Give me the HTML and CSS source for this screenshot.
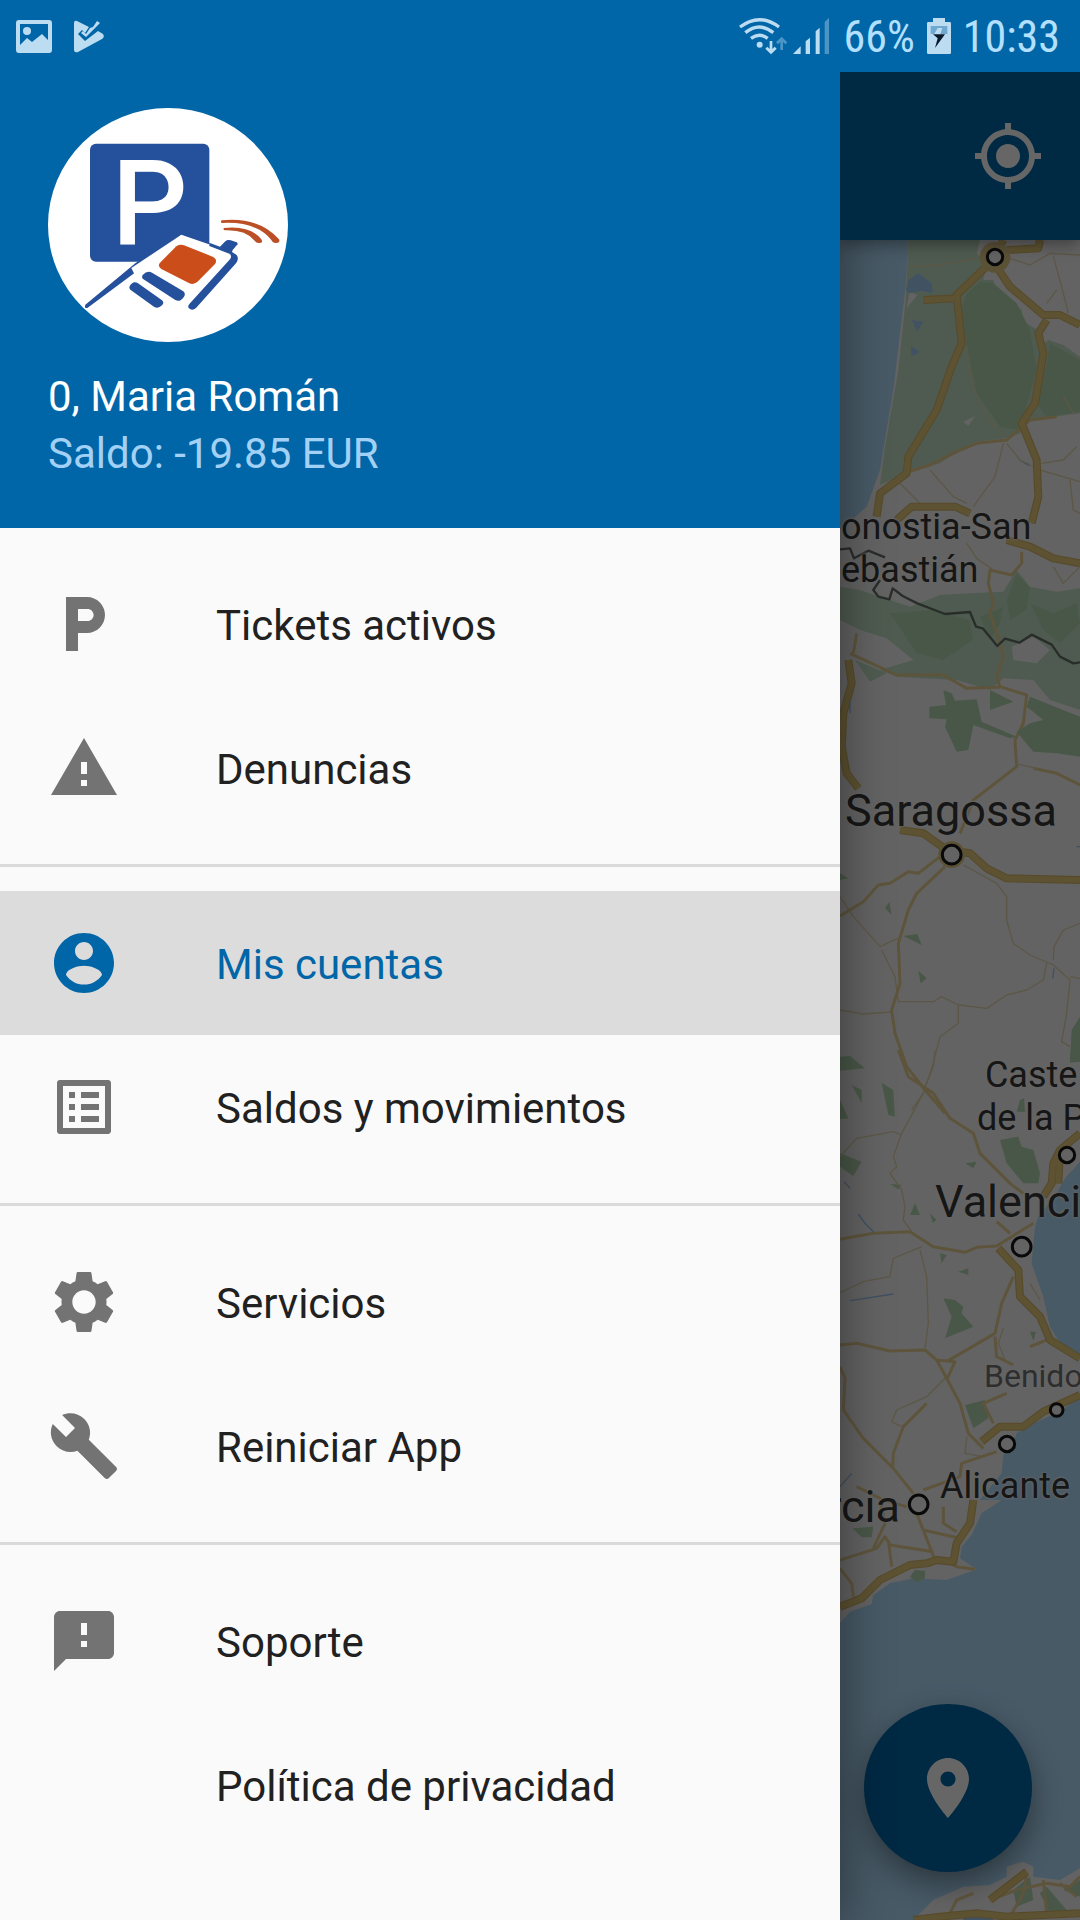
FILE: index.html
```html
<!DOCTYPE html>
<html lang="es">
<head>
<meta charset="utf-8">
<meta name="viewport" content="width=device-width, initial-scale=1">
<title>Mis cuentas</title>
<link rel="stylesheet" href="styles.css">
</head>
<body>
<div class="screen">
  <header class="status">
    <div class="status-left">
      <svg class="ic-photo" viewBox="0 0 36 33" aria-hidden="true"><path fill-rule="evenodd" d="M3 0h30a3 3 0 0 1 3 3v27a3 3 0 0 1-3 3H3a3 3 0 0 1-3-3V3a3 3 0 0 1 3-3zm1 4v21l7-7 5 4 10-8 6 6V4z"/><circle cx="11" cy="11" r="4"/></svg>
      <svg class="ic-play" viewBox="0 0 30 33" aria-hidden="true"><path d="M0 3Q0 0 3 1L15 7 11 13 8 10 4 14 11 21 24 11 29 14Q31 17 28 19L4 32Q0 33 0 30z"/><path d="M16 8 19 7 23 1 26 3 12 17 7 13 9 11 12 14z"/></svg>
    </div>
    <div class="status-right">
      <div class="net">
        <svg class="ic-wifi" viewBox="54 45 144 120" aria-hidden="true"><g class="arcs"><path d="M57 78Q115 34 174 78"/><path d="M73 95Q115 61 157 95"/><path d="M90 112Q115 93 140 112"/></g><circle cx="116" cy="131" r="9"/><path d="M146 120h8v24l7-7 6 6-17 17-17-17 6-6 7 7z"/><path class="faint" d="M178 147h8v-24l7 7 6-6-17-17-17 17 6 6 7-7z"/></svg>
        <svg class="ic-signal" viewBox="217 48 108 114" aria-hidden="true"><path d="M217 159h23v-23zM255 159h13v-49l-13 11zM285 159h12V80l-12 11z"/><path class="faint" d="M312 159h13V50l-13 13z"/></svg>
      </div>
      <span class="status-text">66%</span>
      <svg class="ic-battery" viewBox="618 54 72 108" aria-hidden="true"><path d="M636 54h36v12h14q4 0 4 4v88q0 4-4 4h-64q-4 0-4-4V70q0-4 4-4h14z"/><path class="level" d="M629 78h50v24h-50z"/><path d="m650 84-14 25h20l8-25z"/><path class="bolt" d="M636 103h36l-30 41 8-29z"/></svg>
      <span class="status-text">10:33</span>
    </div>
  </header>

  <div class="body">
    <aside class="drawer">
      <div class="account">
        <svg class="avatar" viewBox="0 0 720 702" role="img" aria-label="Logotipo">
          <ellipse cx="360" cy="351" rx="360" ry="351" fill="#fff"/>
          <rect x="126" y="107" width="358" height="354" rx="18" fill="#25509b"/>
          <text class="logo-letter" x="191" y="411">P</text>
          <path d="M399 382 570 448 420 602 240 520 114 602z" fill="#fff"/>
          <path d="M112 590 262 466 276 456 312 456 118 600Q108 602 112 590z" fill="#25509b"/>
          <path d="M400 380 548 431Q558 440 551 450L440 560 260 500 250 480z" fill="#fff"/>
          <path d="M484 404 516 416 532 400Q538 394 548 397L566 403Q572 408 566 412L554 426 552 432 566 441Q574 452 564 466L444 600Q432 610 422 600 418 594 426 586L546 454Q552 446 546 438L484 414z" fill="#25509b"/>
          <path d="M385 415Q396 408 408 412L494 446Q510 454 501 468L450 520Q438 532 424 526L340 483Q328 474 336 464z" fill="#cb4e1a"/>
          <path d="M284 501Q298 486 312 494L406 550Q414 558 408 566 396 584 382 576L284 512Q280 506 284 501zM245 534Q256 516 270 526L342 577Q350 584 342 592 330 604 318 596L247 545Q242 540 245 534z" fill="#25509b"/>
          <path d="M521 337Q634 326 693 394 698 404 686 405 674 406 670 396 626 340 522 345 516 342 521 337zM528 360Q608 352 640 394 646 404 636 405 624 406 620 398 592 364 530 367 524 364 528 360z" fill="#bb5026"/>
        </svg>
        <p class="name">0, Maria Román</p>
        <p class="balance">Saldo: -19.85 EUR</p>
      </div>
      <nav class="menu">
        <ul class="group">
          <li><a class="item" href="#tickets"><svg class="icon" viewBox="0 0 24 24" aria-hidden="true"><path d="M13 3H6v18h4v-6h3c3.31 0 6-2.69 6-6s-2.69-6-6-6zm.2 8H10V7h3.200c1.100 0 2 .900 2 2s-.900 2-2 2z"/></svg><span class="label">Tickets activos</span></a></li>
          <li><a class="item" href="#denuncias"><svg class="icon" viewBox="0 0 24 24" aria-hidden="true"><path d="M1 21h22L12 2 1 21zm12-3h-2v-2h2v2zm0-4h-2v-4h2v4z"/></svg><span class="label">Denuncias</span></a></li>
        </ul>
        <ul class="group">
          <li><a class="item active" href="#cuentas" aria-current="page"><svg class="icon" viewBox="0 0 24 24" aria-hidden="true"><path d="M12 2C6.480 2 2 6.480 2 12s4.480 10 10 10 10-4.480 10-10S17.520 2 12 2zm0 3c1.660 0 3 1.340 3 3s-1.340 3-3 3-3-1.340-3-3 1.340-3 3-3zm0 14.200c-2.500 0-4.710-1.280-6-3.220.030-1.990 4-3.080 6-3.080 1.990 0 5.970 1.090 6 3.080-1.290 1.940-3.500 3.220-6 3.220z"/></svg><span class="label">Mis cuentas</span></a></li>
          <li><a class="item" href="#saldos"><svg class="icon" viewBox="0 0 24 24" aria-hidden="true"><path d="M19 5v14H5V5h14m1.100-2H3.900c-.500 0-.900.400-.900.900v16.200c0 .400.400.900.900.900h16.200c.400 0 .900-.500.900-.900V3.900c0-.500-.500-.900-.900-.900zM11 7h6v2h-6V7zm0 4h6v2h-6v-2zm0 4h6v2h-6zM7 7h2v2H7zm0 4h2v2H7zm0 4h2v2H7z"/></svg><span class="label">Saldos y movimientos</span></a></li>
        </ul>
        <ul class="group">
          <li><a class="item" href="#servicios"><svg class="icon" viewBox="0 0 24 24" aria-hidden="true"><path d="M19.430 12.980c.040-.320.070-.640.070-.980s-.030-.660-.070-.980l2.110-1.650c.190-.150.240-.420.120-.640l-2-3.460c-.120-.220-.390-.300-.610-.220l-2.490 1c-.520-.400-1.080-.730-1.690-.980l-.380-2.650C14.460 2.180 14.250 2 14 2h-4c-.250 0-.460.180-.490.420l-.380 2.650c-.610.250-1.170.590-1.690.980l-2.490-1c-.230-.090-.490 0-.610.220l-2 3.460c-.130.220-.070.490.120.640l2.110 1.650c-.040.320-.070.650-.070.980s.030.660.070.980l-2.110 1.650c-.190.150-.240.420-.120.640l2 3.460c.120.220.390.300.610.220l2.490-1c.520.400 1.080.730 1.690.980l.380 2.650c.030.240.240.420.490.420h4c.250 0 .460-.180.490-.420l.380-2.650c.610-.250 1.170-.590 1.690-.980l2.490 1c.230.090.490 0 .610-.220l2-3.460c.120-.220.070-.490-.120-.640l-2.110-1.650zM12 15.900c-2.150 0-3.900-1.750-3.900-3.900s1.750-3.900 3.900-3.900 3.900 1.750 3.900 3.900-1.750 3.900-3.900 3.900z"/></svg><span class="label">Servicios</span></a></li>
          <li><a class="item" href="#reiniciar"><svg class="icon" viewBox="0 0 24 24" aria-hidden="true"><path d="M22.700 19l-9.100-9.100c.900-2.300.400-5-1.500-6.900-2-2-5-2.400-7.400-1.300L9 6 6 9 1.600 4.700C.400 7.100.900 10.100 2.900 12.100c1.900 1.900 4.600 2.400 6.900 1.500l9.100 9.100c.400.400 1 .400 1.400 0l2.300-2.300c.500-.400.500-1.100.100-1.400z"/></svg><span class="label">Reiniciar App</span></a></li>
        </ul>
        <ul class="group">
          <li><a class="item" href="#soporte"><svg class="icon" viewBox="0 0 24 24" aria-hidden="true"><path d="M20 2H4c-1.100 0-1.990.900-1.990 2L2 22l4-4h14c1.100 0 2-.900 2-2V4c0-1.100-.900-2-2-2zm-7 12h-2v-2h2v2zm0-4h-2V6h2v4z"/></svg><span class="label">Soporte</span></a></li>
          <li><a class="item" href="#privacidad"><span class="icon"></span><span class="label">Política de privacidad</span></a></li>
        </ul>
      </nav>
    </aside>

    <main class="content">
      <div class="appbar">
        <button class="bar-button" type="button" aria-label="Mi ubicación"><svg viewBox="0 0 24 24" aria-hidden="true"><path d="M12 8c-2.210 0-4 1.790-4 4s1.790 4 4 4 4-1.790 4-4-1.790-4-4-4zm8.940 3c-.460-4.170-3.770-7.480-7.940-7.940V1h-2v2.060C6.830 3.520 3.520 6.830 3.060 11H1v2h2.060c.460 4.170 3.770 7.480 7.940 7.940V23h2v-2.060c4.170-.460 7.480-3.770 7.940-7.940H23v-2h-2.060zM12 19c-3.870 0-7-3.130-7-7s3.130-7 7-7 7 3.130 7 7-3.130 7-7 7z"/></svg></button>
      </div>
      <div class="map">
        <svg class="tiles" viewBox="30 30 720 5040" preserveAspectRatio="xMinYMin slice" aria-hidden="true">
          <!-- Landes and the Bay of Biscay -->
          <path class="sea" d="M30 30H235L228 160 215 270 190 480 150 720 110 830 30 900z"/>
          <path class="park" d="M235 30H450L440 70 470 100 460 150 490 150 500 180 540 210 575 240 580 275 625 300 640 340 655 330 700 345 750 380V550L640 565 590 570 570 610 530 625 440 635 380 665 330 700 240 725 150 765 165 650 205 420 228 200z"/>
          <path class="forest" d="M410 190 450 155 490 160 560 220 600 300 620 420 570 600 510 590 440 490 410 350 390 250zM660 340 750 390V545L650 560 620 520 650 400z"/>
          <path class="land" d="M400 575 435 558 415 588zM238 185 262 195 230 235z"/>
          <path class="lake" d="M235 150 265 130 305 160 308 188 270 182 240 190 228 182zM245 270 280 275 262 305zM243 348 270 365 245 380zM565 690 600 702 595 708z"/>
          <path class="park" d="M30 1070 90 1080 180 1110 240 1130 330 1095 420 1090 520 1085 560 1020 600 1070 680 1085 750 1075V1440L660 1410 610 1350 520 1345 480 1380 380 1350 200 1340 150 1320 250 1290 170 1225 90 1200 30 1170zM75 1290 170 1330 120 1355z"/>
          <path class="forest" d="M560 1030 600 1075 590 1140 540 1170 530 1110zM450 1160 520 1130 510 1180 480 1230zM600 1120 670 1150 740 1120 750 1180 690 1240 640 1200zM180 1150 300 1140 420 1170 430 1230 340 1290 260 1270z"/>
          <path class="land" d="M545 1250 610 1220 660 1260 620 1300 550 1290z"/>
          <g class="thin">
            <path d="M235 110 330 105 440 85M670 80 695 170 715 250M650 220 680 180M525 80 600 105 660 70 750 75M410 350 430 480 470 560 520 620M700 500 730 550M520 640 495 740 430 830M300 720 370 800 410 820M210 760 270 820M530 640 570 690 630 720 750 755M635 700 700 690 740 650M410 940 440 985 490 1020M670 1010 700 1060 750 1010M720 750 730 840 750 850"/>
          </g>
          <g class="mid">
            <path d="M220 730 300 705 380 665 440 640 530 630 600 570 680 560"/>
            <path d="M575 965V1000L545 1035 480 1020 475 1060 490 1120 480 1150 510 1240 520 1280 500 1340 510 1370 590 1395 580 1480 555 1530 560 1610 430 1710 390 1810"/>
            <path d="M60 1270 200 1335 340 1335 410 1375 510 1372"/>
            <path d="M610 1615 680 1630 750 1665M80 1210 70 1270"/>
          </g>
          <g class="casing"><path d="M520 30 495 85 380 195 395 340 365 410 320 540 235 680 230 730 150 790 140 860M280 210 380 205M500 110 540 170 640 255 690 255 750 285M650 270 625 310 640 370 615 520 575 580 620 690 625 800 605 880M200 870 245 830 375 830 420 850M530 930 600 950 670 985 750 1000M530 60 625 55 630 30"/></g>
          <g class="road"><path d="M520 30 495 85 380 195 395 340 365 410 320 540 235 680 230 730 150 790 140 860M280 210 380 205M500 110 540 170 640 255 690 255 750 285M650 270 625 310 640 370 615 520 575 580 620 690 625 800 605 880M200 870 245 830 375 830 420 850M530 930 600 950 670 985 750 1000M530 60 625 55 630 30"/></g>
          <circle class="town" cx="495" cy="82" r="46"/>
          <path class="border" d="M30 958 60 955 72 985 115 962 165 982M150 1050 130 1080 145 1100 178 1108 188 1075 218 1098 262 1120 345 1152 420 1146 438 1190 458 1195 502 1248 525 1226 568 1238 605 1214 665 1244 690 1280 730 1300 750 1297"/>

          <!-- Ebro valley -->
          <g transform="translate(0 1290)">
            <path class="forest" d="M340 90 365 100 375 122 440 118 455 185 560 230 540 235 430 195 415 270 380 275 345 200 350 178 298 175 298 140 348 135zM480 90 550 125 480 150zM600 110 750 170V290L680 280 610 275 560 215 600 190 640 180 590 140zM220 828 262 822 275 855zM265 932 290 955 272 970zM165 745 178 725 185 765zM30 1190 60 1188 105 1225 30 1232zM65 1275 95 1290 95 1330zM155 1268 190 1290 195 1370 175 1365zM30 640 55 655 30 660zM725 1110 750 1070V1205H720z"/>
            <g class="thin"><path d="M30 710 70 770 150 860 215 830M155 870 195 950 205 1025H310L335 1010 385 1035 470 1045 530 1005 590 990 640 960 650 910M385 1035V1090L330 1130 310 1210 280 1300 245 1350M30 1050 100 1062 185 1056M400 615 500 670 530 710V780L550 850 600 885 670 915 720 960 710 1060 695 1145 720 1160M670 900 672 860 700 810 750 790M720 950 750 955M555 310 620 325"/></g>
            <g class="mid"><path d="M30 768 100 725 145 675 180 670 235 635 265 640 330 590M345 620 260 700 235 750 205 850 210 970 185 1050 195 1120 230 1220 285 1290 345 1360"/></g>
            <g class="casing"><path d="M55 0 65 70 40 160 35 260 50 340 85 385M210 510 280 520 350 570 420 580 470 625 530 655 750 660"/></g>
            <g class="road"><path d="M55 0 65 70 40 160 35 260 50 340 85 385M210 510 280 520 350 570 420 580 470 625 530 655 750 660"/></g>
            <circle class="town" cx="365" cy="584" r="40"/>
            <path class="river" d="M60 120V160M672 925 668 955M740 560h10"/>
          </g>

          <!-- Valencia coast -->
          <g transform="translate(0 2460)">
            <path class="sea" d="M750 335 705 385 680 430 625 500 615 530 605 640 640 740 660 830 690 880 750 915zM750 1040 690 1085 610 1120 560 1150 545 1190 520 1215 515 1270 450 1350H750z"/>
            <path class="forest" d="M510 270 565 260 575 290 610 300 630 370 625 400 580 400 530 340zM340 745 375 750 400 770 395 790 430 830 345 865 365 800zM405 1065 465 1050 475 1105 430 1135zM30 310 95 335 70 378 30 350zM240 495 255 460 270 495zM300 490 320 510 308 518zM405 340 440 335 430 355zM385 665 415 655 415 675zM330 610 350 615 335 640zM180 402 215 405 205 418zM720 10 750 0V35L720 38zM600 845 618 845 610 872zM570 150 582 145 585 185 560 185zM30 150 55 205 30 208z"/>
            <g class="thin"><path d="M280 130 215 250 190 320 200 350 180 370 215 420 225 470 220 510 245 545M30 320 80 265 190 245 215 255M275 590 190 625 180 680 100 695 30 728M270 600 290 680 295 820 285 895M345 985 290 1040 200 1080 185 1115 215 1130M520 835 505 880 525 930M600 700 630 750M410 1160 405 1210 460 1220M315 0 310 50 285 110"/></g>
            <g class="mid"><path d="M205 0 235 80 310 130 360 205 430 250 450 310 540 400 580 430M30 568 130 550 240 545 310 590 405 607 440 592 500 588 610 520M30 885 80 880 180 903 285 900 320 930 350 985 390 1060 415 1150 460 1195M550 680 515 760 495 850 350 935M495 860 500 920 550 945M320 930 375 935 350 990M30 950 45 985 40 1080 100 1165 190 1255 250 1330M290 1060 220 1130 190 1210 188 1255M280 1320 390 1280 395 1240 500 1205M530 1030 460 1060 490 1120M600 890 650 870M500 515 540 550"/></g>
            <g class="casing"><path d="M750 250 690 300 670 340 665 400 640 440M690 300 685 400M505 595 565 660 570 740 630 800 660 870 750 925M750 1035 640 1085 580 1130 510 1130 455 1175"/></g>
            <g class="road"><path d="M750 250 690 300 670 340 665 400 640 440M690 300 685 400M505 595 565 660 570 740 630 800 660 870 750 925M750 1035 640 1085 580 1130 510 1130 455 1175"/></g>
            <path class="river" d="M85 492 105 520 130 545M60 752 190 732M42 395 60 415M30 1310 65 1270"/>
          </g>

          <!-- Murcia, Alicante and the African shore -->
          <g transform="translate(0 3750)">
            <path class="sea" d="M515 60 455 100 425 165 395 200 390 235 440 268 350 300 250 295 180 310 130 345 125 372 60 395 30 430V1320H250L310 1260 400 1220 480 1215 530 1190 530 1160 580 1145 610 1160V1190L690 1200 750 1165V50z"/>
            <path class="forest" d="M68 145 130 140 125 172 95 172zM240 290 255 270 285 272 285 295 260 308zM550 1230 600 1190 610 1260 560 1280zM650 1220 710 1290 660 1300 630 1240zM700 1230 750 1200V1250z"/>
            <path class="lake" d="M400 1315 480 1295 490 1320H400z"/>
            <g class="mid"><path d="M30 240 140 205 165 170 180 195 310 215M175 180 185 260M130 205 165 130 150 60M260 100 315 240M280 150 390 175M340 80V130L380 155M30 265 65 310 70 350M80 20 160 60 230 80M350 245 380 260 435 268M430 1240 380 1260 360 1300M480 1260 560 1230 650 1210 720 1220 750 1190M590 1180 580 1240 540 1310M640 1200 650 1300M690 1210 740 1250"/></g>
            <g class="casing"><path d="M30 380 95 355 150 300 240 255 290 250 320 240 370 245 380 190 420 130 430 60M250 1320 330 1310 440 1300 530 1310 750 1300M480 1260 590 1175"/></g>
            <g class="road"><path d="M30 380 95 355 150 300 240 255 290 250 320 240 370 245 380 190 420 130 430 60M250 1320 330 1310 440 1300 530 1310 750 1300M480 1260 590 1175"/></g>
          </g>
          <g class="marker">
            <circle cx="495" cy="81" r="23"/><circle cx="365" cy="1874" r="28"/><circle cx="711" cy="2775" r="23"/><circle cx="575" cy="3050" r="28"/><circle cx="680" cy="3540" r="19"/><circle cx="531" cy="3642" r="23"/><circle cx="266" cy="3823" r="28"/>
          </g>
        </svg>
        <span class="place mid-size donostia">onostia-San<br>ebastián</span>
        <span class="place large zaragoza">Saragossa</span>
        <span class="place mid-size castellon">Caste<br>de la P</span>
        <span class="place large valencia">Valenci</span>
        <span class="place small benidorm">Benido</span>
        <span class="place mid-size alicante">Alicante</span>
        <span class="place large murcia">rcia</span>
      </div>
      <button class="fab" type="button" aria-label="Aparcar aquí"><svg viewBox="0 0 24 24" aria-hidden="true"><path d="M12 2C8.130 2 5 5.130 5 9c0 5.250 7 13 7 13s7-7.750 7-13c0-3.870-3.130-7-7-7zm0 9.500c-1.380 0-2.500-1.120-2.500-2.500s1.120-2.500 2.500-2.500 2.500 1.120 2.500 2.500-1.120 2.500-2.500 2.500z"/></svg></button>
      <div class="scrim"></div>
    </main>
  </div>
</div>
</body>
</html>
```
FILE: styles.css
```css
:root {
  --brand: #0066a8;
  --surface: #fafafa;
  --line: #dadada;
  --ink: #212121;
  --icon: #737373;
}

* { box-sizing: border-box; }

body {
  margin: 0;
  font-family: Roboto, "Noto Sans", sans-serif;
  font-size: 42px;
  color: var(--ink);
}

p, ul { margin: 0; padding: 0; list-style: none; }
button { padding: 0; border: 0; color: #fff; cursor: pointer; }
svg { display: block; fill: currentColor; }

.screen {
  display: flex;
  flex-direction: column;
  min-height: 100vh;
}

/* Status bar */
.status {
  display: flex;
  justify-content: space-between;
  align-items: center;
  height: 72px;
  padding: 0 20px 0 16px;
  background: var(--brand);
  color: #bcdcf2;
}
.status-left { display: flex; gap: 22px; }
.status-right { display: flex; align-items: center; gap: 12px; }
.net { display: flex; align-items: center; gap: 6px; padding-right: 3px; }
.status-text {
  padding-top: 2px;
  font-family: "Roboto Condensed", Roboto, sans-serif;
  font-size: 44px;
  line-height: 70px;
  color: #b3e0ff;
}
.ic-photo { width: 36px; height: 33px; }
.ic-play { width: 30px; height: 33px; }
.ic-wifi { width: 48px; height: 40px; }
.ic-signal { width: 36px; height: 38px; }
.ic-battery { width: 24px; height: 36px; }
.arcs { fill: none; stroke: currentColor; stroke-width: 10; }
.faint { opacity: .4; }
.level { fill: #6fa9d0; }
.bolt { fill: #0a1c2c; }

/* Drawer */
.body {
  flex: 1;
  display: grid;
  grid-template-columns: minmax(0, 840px) minmax(240px, 1fr);
}
.drawer {
  position: relative;
  z-index: 1;
  background: var(--surface);
  box-shadow: 0 0 48px rgba(0, 0, 0, .45);
  clip-path: inset(0 -60px 0 0);
}
.account {
  height: 456px;
  padding: 36px 48px 0;
  background: var(--brand);
}
.avatar { width: 240px; height: 234px; }
.logo-letter { font-size: 357px; font-weight: 500; fill: #fff; }
.name, .balance { line-height: 57px; }
.name { margin-top: 26px; color: #fff; }
.balance { color: #a3d1f5; }

.group { padding: 24px 0; }
.group + .group { border-top: 3px solid var(--line); }
.item {
  display: flex;
  align-items: center;
  gap: 96px;
  height: 144px;
  padding: 0 48px;
  color: var(--ink);
  text-decoration: none;
}
.icon { flex: none; width: 72px; height: 72px; color: var(--icon); }
.label { padding-top: 3px; }
.active { background: #dcdcdc; }
.active, .active .icon { color: var(--brand); }

/* Map screen behind the drawer */
.content {
  position: relative;
  display: flex;
  flex-direction: column;
  overflow: hidden;
}
.appbar {
  position: relative;
  z-index: 1;
  display: flex;
  justify-content: flex-end;
  align-items: center;
  height: 168px;
  padding-right: 36px;
  background: var(--brand);
  box-shadow: 0 4px 16px rgba(0, 0, 0, .4);
}
.bar-button { width: 72px; height: 72px; background: none; }
.map {
  position: relative;
  flex: 1;
  overflow: hidden;
  background: #f7f7f7;
}
.tiles {
  position: absolute;
  inset: 0;
  width: 100%;
  height: 100%;
  fill: none;
  stroke-linejoin: round;
}
.sea { fill: #b2e0ff; }
.land { fill: #f7f7f7; }
.park { fill: #c6e4c8; }
.forest { fill: #b6dab4; }
.lake { fill: #a2ccf5; }
.river { stroke: #9cc8f0; stroke-width: 4; }
.thin { stroke: #e6d8ae; stroke-width: 4; }
.mid { stroke: #e8d294; stroke-width: 9; }
.casing { stroke: #d8ba6c; stroke-width: 24; }
.road { stroke: #e8cd7c; stroke-width: 17; }
.town { fill: #e3cc88; }
.border { stroke: #66706a; stroke-width: 7; }
.marker { fill: #f7f7f7; stroke: #181818; stroke-width: 9; }

.place {
  position: absolute;
  white-space: nowrap;
  color: #383838;
  text-shadow: 0 0 3px #fff, 0 0 3px #fff;
}
.large { font-size: 45px; line-height: 52px; }
.mid-size { font-size: 36px; line-height: 43px; }
.small { font-size: 32px; line-height: 40px; color: #747474; }
.donostia { left: 1px; top: 266px; }
.zaragoza { left: 5px; top: 545px; }
.castellon { left: 137px; top: 814px; text-align: center; }
.valencia { left: 95px; top: 936px; }
.benidorm { left: 144px; top: 1116px; }
.alicante { left: 100px; top: 1225px; }
.murcia { right: 180px; top: 1241px; }

.fab {
  position: absolute;
  right: 48px;
  bottom: 48px;
  display: grid;
  place-items: center;
  width: 168px;
  height: 168px;
  border-radius: 50%;
  background: var(--brand);
  box-shadow: 0 12px 30px rgba(0, 0, 0, .4);
}
.fab svg { width: 72px; height: 72px; }
.scrim {
  position: absolute;
  inset: 0;
  z-index: 2;
  background: rgba(0, 0, 0, .6);
}
```
